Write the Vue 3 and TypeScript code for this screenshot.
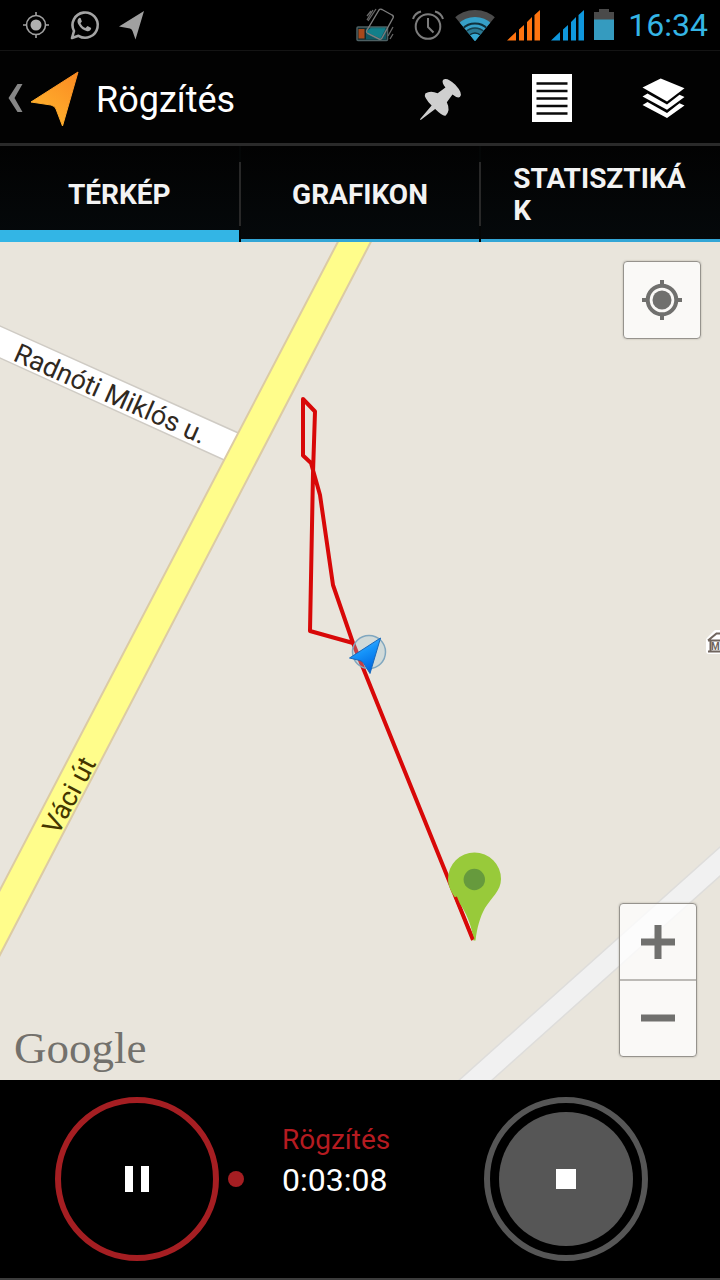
<script setup lang="ts">
import { ref } from 'vue'

interface Tab {
  id: string
  label: string
}

const tabs: Tab[] = [
  { id: 'map', label: 'TÉRKÉP' },
  { id: 'chart', label: 'GRAFIKON' },
  { id: 'stats', label: 'STATISZTIKÁK' },
]
const activeTab = ref('map')
const signals: string[] = ['#ff7410', '#0f97dc']
const elapsed = ref('0:03:08')
</script>

<template>
  <div class="screen">
    <div class="status">
      <svg class="s48" viewBox="12 0 48 50" fill="none" stroke="#a0a0a0" stroke-width="1.6">
        <circle cx="36" cy="25" r="9.5" />
        <circle cx="36" cy="25" r="5.5" fill="#b0b0b0" stroke="none" />
        <path d="M36 12v4M36 34v4M23 25h4M45 25h4" />
      </svg>
      <svg class="s48" viewBox="60 0 48 50">
        <path d="M72 38L74 31A12.600 12.600 0 1 1 78.500 35.800z" fill="none" stroke="#a4a4a4" stroke-width="2.600" stroke-linejoin="round" />
        <path d="M79.500 17.800c-2.500 1.500-2.300 4.500-1 6.700 2 3.500 5 6 8.700 6.700 2 .4 4-1 4-3.200l-3.700-2-2 2c-2.200-.8-4-2.500-5-4.700l1.400-1.800-1.300-3.600z" fill="#a8a8a8" />
      </svg>
      <svg class="s48" viewBox="108 0 48 50">
        <path d="M144 11L119 26.500L130 28.500Q132 29 132.500 31L135.500 39.500Z" fill="#a0a0a0" />
      </svg>
      <span class="spacer"></span>
      <svg class="s56" viewBox="352 0 56 50" fill="none">
        <rect x="357" y="27" width="30.500" height="13.500" rx="1" fill="#10292c" stroke="#4d6063" stroke-width="1.500" />
        <rect x="358.500" y="29" width="6" height="9.500" fill="#a8481a" />
        <rect x="366" y="28.500" width="20" height="11" fill="#0e5863" />
        <path d="M366.500 31L379 10Q380 8.500 382 9.500L392 15Q394 16 393 18L382 38Q381 40 379 39L368 33.500Q366 32.500 366.500 31Z" stroke="#7d7d7d" stroke-width="1.400" />
        <path d="M366.500 32L371 27.500H386L380.500 38.500Z" fill="#159aa5" opacity=".6" />
        <path d="M376 9L368 21M371 11L367 16M373 10L367 20M393 27L388 36M393 34L390 39" stroke="#686868" stroke-width="1.300" />
      </svg>
      <svg class="s40" viewBox="408 0 40 50" fill="none" stroke="#7c7c7c" stroke-width="2">
        <circle cx="428" cy="26.500" r="12.300" />
        <path d="M428 18v9l5.500 5.500M413 19q2-6 8-7.500M443 19q-2-6-8-7.500" />
      </svg>
      <svg class="s52" viewBox="448 0 52 50">
        <defs><clipPath id="fan"><path d="M475 41L448 8.500V0H502V8.500Z" /></clipPath></defs>
        <g clip-path="url(#fan)">
          <circle cx="475" cy="41" r="31" fill="#4b4b4b" />
          <circle cx="475" cy="41" r="24" fill="#36a0c8" />
          <circle cx="475" cy="41" r="17.500" fill="none" stroke="#10303c" stroke-width="2" />
          <circle cx="475" cy="41" r="13" fill="#2a7892" stroke="#16414f" stroke-width="1.500" />
          <circle cx="475" cy="41" r="8" fill="#36a9d2" stroke="#10303c" stroke-width="1.500" />
        </g>
      </svg>
      <svg v-for="color in signals" :key="color" class="s44" viewBox="499 0 44 50" :fill="color">
        <path d="M506 40.500L515 32V40.500ZM518 40.500V29.500L523 25V40.500ZM526 40.500V22L531 17V40.500ZM533.500 40.500V15L539 10V40.500Z" />
      </svg>
      <svg class="s32" viewBox="588 0 32 50">
        <path d="M599 9h10v3h5v8h-20v-8h5z" fill="#4a4a4a" />
        <rect x="594" y="19.500" width="20" height="20.500" fill="#359bbf" />
      </svg>
      <time class="clock">16:34</time>
    </div>

    <header class="bar">
      <button class="home" type="button" aria-label="Vissza">
        <svg viewBox="0 65 88 64">
          <defs>
            <linearGradient id="amber" x1="1" y1="0" x2="0.300" y2="1">
              <stop offset="0" stop-color="#fb8a22" />
              <stop offset="1" stop-color="#ffb42e" />
            </linearGradient>
          </defs>
          <path d="M17.500 84H22.500L14.500 98L22.500 112H17.500L8.500 98Z" fill="#868686" />
          <path d="M78 72L62.500 126L56 109Q55 106 51 105L31 102Z" fill="url(#amber)" stroke="url(#amber)" stroke-linejoin="round" />
        </svg>
      </button>
      <h1>Rögzítés</h1>
      <button class="action" type="button" aria-label="Jelölő">
        <svg viewBox="411 69 56 56" fill="#cfcfcf">
          <g transform="translate(437 102) rotate(45)">
            <path d="M-12-19Q-12-24 0-24.500Q12-24 12-19Q11-16 5-15.500L6.500-6Q15-3 15 4Q14 7 3 7L.5 25H-.5L-2 7Q-14 7-15 3Q-14-3-6.500-6L-5-15.500Q-11-16-12-19Z" />
          </g>
        </svg>
      </button>
      <button class="action" type="button" aria-label="Lista">
        <svg viewBox="524 69 56 56">
          <path d="M532 74h40v48h-40z" fill="#fff" />
          <path d="M536.500 83.500h31M536.500 91h31M536.500 98.500h31M536.500 106h31M536.500 113.500h31" stroke="#0a0a0a" stroke-width="2.500" />
        </svg>
      </button>
      <button class="action" type="button" aria-label="Rétegek">
        <svg viewBox="636 69 56 56" fill="#fff">
          <path d="M660.700 78.500L684.500 88.300L667 101.500L642.500 87.500Z" />
          <path d="M642.500 96.500L647.500 93.500L667 104.500L679.500 94.700L684.500 97L667 109.700Z" />
          <path d="M642.500 105L647.500 102L667 113L679.500 103.300L684.500 105.500L667 118Z" />
        </svg>
      </button>
    </header>

    <div class="tabs" role="tablist">
      <button
        v-for="tab in tabs"
        :key="tab.id"
        class="tab"
        :class="{ active: tab.id === activeTab }"
        type="button"
        role="tab"
        :aria-selected="tab.id === activeTab"
        @click="activeTab = tab.id"
      >
        <span>{{ tab.label }}</span>
      </button>
    </div>

    <main class="map">
      <svg class="canvas" viewBox="0 242 720 838" preserveAspectRatio="xMidYMid slice">
        <path d="M-10 321.500L245 436L233 464L-10 353.500Z" fill="#fff" stroke="#cfcbc4" stroke-width="1.500" />
        <path d="M-10 909L343 232H376L-10 974Z" fill="#fffd8b" stroke="#dccba4" stroke-width="2" />
        <path d="M448 1090L730 838V867L481 1090Z" fill="#f1f1f1" stroke="#dedddb" stroke-width="1.500" />
        <text class="street" transform="translate(12 360) rotate(24)">Radnóti Miklós u.</text>
        <text class="street road" transform="translate(58 836) rotate(-62)">Váci út</text>
        <path d="M709 640L716 633H730V651H709Z" fill="#fff" stroke="#fff" stroke-width="6" stroke-linejoin="round" />
        <path d="M708 640.500L716.500 633.500H730M708 640.500H730M710.500 640V651M708 651.500H730" fill="none" stroke="#70655e" stroke-width="2" />
        <text class="museum" x="711" y="650">M</text>
        <path class="track" d="M473 940L452 888L384 720L353 643L333 585L320 495L311 463L303 455.500V399L315 411.500L313 473L310 631L353 643" />
        <circle cx="369" cy="652" r="16.500" fill="#9dbfd5" fill-opacity=".3" stroke="#80a7bf" stroke-width="1.500" />
        <defs>
          <linearGradient id="azure" x1="0" y1="0" x2="0.400" y2="1">
            <stop offset="0" stop-color="#64c4ff" />
            <stop offset="0.500" stop-color="#1594fa" />
            <stop offset="1" stop-color="#0068e0" />
          </linearGradient>
        </defs>
        <path d="M380.500 638L370 673.500L363.500 663Q362 661 360 660.500L349.500 658Z" fill="url(#azure)" stroke="#1769bd" />
        <path d="M473.500 940.500C472 927 468 917 462 907C455 897 448 890 448 879A26.500 26.500 0 0 1 501 879C501 891 491 898 485 908C480 917 477 928 475.500 940.500Z" fill="#98ca3a" />
        <path d="M473 939L455.500 897" stroke="#d80808" stroke-width="3" />
        <circle cx="474.300" cy="879.500" r="10.700" fill="#669a3d" />
      </svg>
      <button class="locate" type="button" aria-label="Saját hely">
        <svg viewBox="0 0 40 40" fill="none" stroke="#70706e" stroke-width="4">
          <circle cx="20" cy="20" r="14.300" />
          <circle cx="20" cy="20" r="9.500" fill="#70706e" stroke="none" />
          <path d="M20 0v6M20 34v6M0 20h6M34 20h6" />
        </svg>
      </button>
      <div class="zoom">
        <button type="button" aria-label="Nagyítás">
          <svg viewBox="0 0 40 40"><path d="M3 20H37M20 3V37" stroke="#70706e" stroke-width="7" /></svg>
        </button>
        <button type="button" aria-label="Kicsinyítés">
          <svg viewBox="0 0 40 40"><path d="M3 19H37" stroke="#70706e" stroke-width="7" /></svg>
        </button>
      </div>
      <span class="brand">Google</span>
    </main>

    <footer class="controls">
      <button class="round pause" type="button" aria-label="Szünet">
        <svg viewBox="0 0 24 26" fill="#fff"><path d="M0 0h8v26H0zM16 0h8v26h-8z" /></svg>
      </button>
      <span class="dot"></span>
      <div class="state">
        <span class="label">Rögzítés</span>
        <span class="timer">{{ elapsed }}</span>
      </div>
      <button class="round stop" type="button" aria-label="Leállítás">
        <span class="disc"><span class="square"></span></span>
      </button>
    </footer>
  </div>
</template>

<style>
body {
  margin: 0;
  background: #000;
}
</style>

<style scoped>
.screen {
  display: flex;
  flex-direction: column;
  min-height: 100vh;
  background: #000;
  color: #fff;
  font-family: Roboto, 'Noto Sans', sans-serif;
}
button {
  margin: 0;
  padding: 0;
  border: 0;
  background: none;
  color: inherit;
  font: inherit;
  cursor: pointer;
}
svg {
  display: block;
}
.status {
  display: flex;
  align-items: center;
  height: 50px;
  padding: 0 12px;
}
.status svg {
  height: 50px;
  flex: none;
}
.s32 { width: 32px; }
.s40 { width: 40px; }
.s44 { width: 44px; }
.s48 { width: 48px; }
.s52 { width: 52px; }
.s56 { width: 56px; }
.spacer {
  flex: 1;
}
.clock {
  margin-left: 8px;
  font-size: 32px;
  line-height: 50px;
  color: #35b5e5;
}
.bar {
  display: flex;
  align-items: center;
  box-sizing: border-box;
  height: 96px;
  border-top: 1px solid #141414;
  border-bottom: 3px solid #2a2a2a;
  background: #020202;
}
.home svg {
  width: 88px;
  height: 64px;
}
h1 {
  flex: 1;
  margin: 0;
  padding: 6px 0 0 8px;
  font-size: 36px;
  font-weight: 400;
  line-height: 48px;
}
.action {
  display: grid;
  place-items: center;
  width: 112px;
  height: 92px;
}
.action svg {
  width: 56px;
  height: 56px;
}
.tabs {
  display: grid;
  grid-template-columns: repeat(3, 1fr);
  gap: 2px;
  height: 96px;
  background: linear-gradient(#282828, #282828) 0 16px / 100% 64px no-repeat, #040606;
}
.tab {
  display: flex;
  align-items: center;
  justify-content: center;
  box-sizing: border-box;
  min-width: 0;
  padding: 2px 32px 0;
  background: linear-gradient(#020202, #05090b);
  box-shadow: inset 0 -3px #33a6d6;
  font-size: 28px;
  font-weight: 700;
  line-height: 32px;
  text-align: left;
  color: #f3f3f3;
}
.tab span {
  min-width: 0;
  overflow-wrap: anywhere;
}
.tab.active {
  box-shadow: inset 0 -12px #33b5e5;
}
.map {
  position: relative;
  flex: 1;
  min-height: 480px;
  overflow: hidden;
  background: #e9e5dc;
}
.canvas {
  position: absolute;
  inset: 0;
  width: 100%;
  height: 100%;
}
.street {
  font-size: 27px;
  fill: #30291f;
}
.road {
  fill: #443600;
}
.museum {
  font-size: 10px;
  font-weight: 700;
  fill: #70655e;
}
.track {
  fill: none;
  stroke: #d80808;
  stroke-width: 4;
  stroke-linejoin: round;
}
.locate,
.zoom {
  position: absolute;
  box-sizing: border-box;
  width: 78px;
  border: 1px solid #96938d;
  border-radius: 4px;
  background: rgba(255, 255, 255, 0.76);
  box-shadow: 0 0 2px #aaa69e;
}
.locate {
  top: 19px;
  right: 19px;
  display: grid;
  place-items: center;
  height: 78px;
}
.locate svg {
  width: 40px;
  height: 40px;
}
.zoom {
  right: 23px;
  bottom: 23px;
  display: flex;
  flex-direction: column;
  height: 154px;
}
.zoom button {
  display: grid;
  place-items: center;
  flex: 1;
}
.zoom button + button {
  border-top: 2px solid #bcbab6;
}
.zoom svg {
  width: 40px;
  height: 40px;
}
.brand {
  position: absolute;
  left: 14px;
  bottom: 6px;
  font-family: 'Liberation Serif', serif;
  font-size: 45px;
  line-height: 52px;
  color: #73716c;
}
.controls {
  display: flex;
  align-items: center;
  box-sizing: border-box;
  height: 200px;
  padding: 0 72px 0 55px;
  border-bottom: 2px solid #3c3c3c;
}
.round {
  display: grid;
  place-items: center;
  box-sizing: border-box;
  flex: none;
  width: 164px;
  height: 164px;
  border-radius: 50%;
}
.pause {
  border: 6px solid #a51e22;
}
.pause svg {
  width: 24px;
  height: 26px;
}
.dot {
  width: 16px;
  height: 16px;
  margin-left: 9px;
  border-radius: 50%;
  background: #a51e22;
}
.state {
  display: flex;
  flex: 1;
  flex-direction: column;
  align-self: flex-start;
  margin: 40px 0 0 38px;
  line-height: 40px;
}
.label {
  font-size: 28px;
  color: #b51b20;
}
.timer {
  font-size: 32px;
}
.stop {
  border: 6px solid #565656;
}
.disc {
  display: grid;
  place-items: center;
  width: 134px;
  height: 134px;
  border-radius: 50%;
  background: #565656;
}
.square {
  width: 20px;
  height: 20px;
  background: #fff;
}
</style>
